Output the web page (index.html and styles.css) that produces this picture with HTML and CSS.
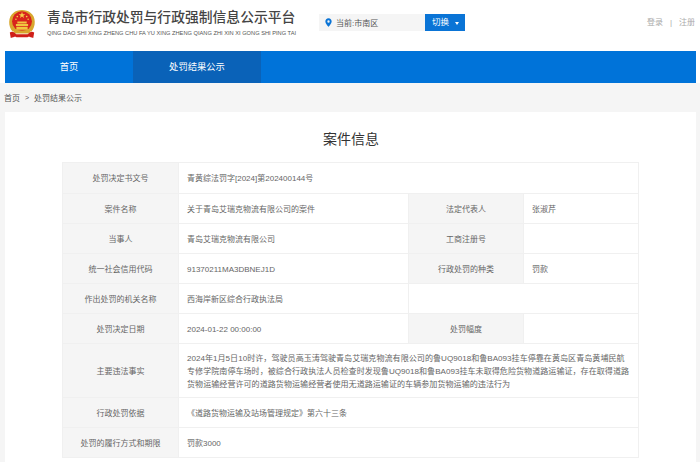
FILE: index.html
```html
<!DOCTYPE html>
<html lang="zh-CN">
<head>
<meta charset="utf-8">
<title>青岛市行政处罚与行政强制信息公示平台</title>
<link rel="stylesheet" href="styles.css">
</head>
<body>
<header class="top">
  <svg class="emblem" viewBox="0 0 32 34" aria-hidden="true">
    <path d="M6 25 C1 20 1 9 7 5 C11 1 21 1 25 5 C31 9 31 20 26 25 Z" fill="#d9a72e"/>
    <circle cx="16" cy="14" r="10.6" fill="#d8231c"/>
    <path d="M16 4 l.9 2.5 2.6 0 -2.1 1.6 .8 2.5 -2.2-1.5 -2.2 1.5 .8-2.5 -2.1-1.6 2.6 0z" fill="#f4cf4a"/>
    <circle cx="11" cy="9" r=".9" fill="#f4cf4a"/><circle cx="21" cy="9" r=".9" fill="#f4cf4a"/>
    <circle cx="9.5" cy="12" r=".8" fill="#f4cf4a"/><circle cx="22.5" cy="12" r=".8" fill="#f4cf4a"/>
    <path d="M9.5 17 h13 v2 h-13z M11 14.2 h10 v2.2 h-10z M10 20 h12 v3 h-12z" fill="#f0c640"/>
    <path d="M7 24 h18 l-1 3 h-16z" fill="#d9a72e"/>
    <path d="M3 26 C6 24 8 26 10 28 L22 28 C24 26 26 24 29 26 L28 32 C25 31 23 30 22 31 L10 31 C9 30 7 31 4 32 Z" fill="#cf1f18"/>
  </svg>
  <div class="brand">
    <div class="brand-cn">青岛市行政处罚与行政强制信息公示平台</div>
    <div class="brand-en">QING DAO SHI XING ZHENG CHU FA YU XING ZHENG QIANG ZHI XIN XI GONG SHI PING TAI</div>
  </div>
  <div class="location">
    <div class="location-box">
      <svg class="pin" viewBox="0 0 10 12" aria-hidden="true">
        <path fill-rule="evenodd" d="M5 0 C2.2 0 .5 2 .5 4.4 C.5 7.4 5 12 5 12 C5 12 9.5 7.4 9.5 4.4 C9.5 2 7.8 0 5 0Z M5 2.8 a1.7 1.7 0 1 1 0 3.4 a1.7 1.7 0 0 1 0-3.4Z" fill="#0a74d6"/>
      </svg>
      <span>当前:市南区</span>
    </div>
    <div class="switch">切换<i class="caret"></i></div>
  </div>
  <div class="auth"><span>登录</span><span class="sep">|</span><span>注册</span></div>
</header>
<nav class="nav">
  <a class="nav-item">首页</a>
  <a class="nav-item active">处罚结果公示</a>
</nav>
<div class="crumb"><span>首页</span><span class="gt">&gt;</span><span>处罚结果公示</span></div>
<main class="card">
  <h1 class="title">案件信息</h1>
  <table class="info">
    <colgroup><col class="c1"><col class="c2"><col class="c3"><col class="c4"></colgroup>
    <tr class="r"><th>处罚决定书文号</th><td colspan="3">青黄综法罚字[2024]第202400144号</td></tr>
    <tr class="r"><th>案件名称</th><td>关于青岛艾瑞克物流有限公司的案件</td><th>法定代表人</th><td>张淑芹</td></tr>
    <tr class="r"><th>当事人</th><td>青岛艾瑞克物流有限公司</td><th>工商注册号</th><td></td></tr>
    <tr class="r"><th>统一社会信用代码</th><td>91370211MA3DBNEJ1D</td><th>行政处罚的种类</th><td>罚款</td></tr>
    <tr class="r"><th>作出处罚的机关名称</th><td>西海岸新区综合行政执法局</td><td colspan="2"></td></tr>
    <tr class="r"><th>处罚决定日期</th><td>2024-01-22 00:00:00</td><th>处罚幅度</th><td></td></tr>
    <tr><th>主要违法事实</th><td colspan="3" class="long">2024年1月5日10时许，驾驶员高玉涛驾驶青岛艾瑞克物流有限公司的鲁UQ9018和鲁BA093挂车停靠在黄岛区青岛黄埔民航专修学院南停车场时，被综合行政执法人员检查时发现鲁UQ9018和鲁BA093挂车未取得危险货物道路运输证，存在取得道路货物运输经营许可的道路货物运输经营者使用无道路运输证的车辆参加货物运输的违法行为</td></tr>
    <tr class="r"><th>行政处罚依据</th><td colspan="3">《道路货物运输及站场管理规定》第六十三条</td></tr>
    <tr class="r"><th>处罚的履行方式和期限</th><td colspan="3">罚款3000</td></tr>
  </table>
</main>
</body>
</html>
```
FILE: styles.css
```css
html, body {
  margin: 0;
  padding: 0;
  height: 462px;
  overflow: hidden;
  background: #f5f5f5;
  font-family: "Liberation Sans", "Noto Sans CJK SC", sans-serif;
}
.top {
  display: flex;
  align-items: flex-start;
  height: 51px;
  box-sizing: border-box;
  background: #fff;
  padding: 8px 5px 0 7px;
}
.emblem { width: 30px; height: 32px; flex: none; }
.brand { margin-left: 10px; width: 272px; flex: none; }
.brand-cn {
  font-size: 13.8px;
  line-height: 20px;
  font-weight: 500;
  color: #444;
  white-space: nowrap;
}
.brand-en {
  font-size: 5.7px;
  line-height: 8px;
  margin-top: 1px;
  color: #555;
  white-space: nowrap;
}
.location { display: flex; margin-top: 6px; height: 17px; }
.location-box {
  width: 106px;
  box-sizing: border-box;
  padding-left: 6px;
  display: flex;
  align-items: center;
  gap: 4px;
  background: #f5f5f5;
  color: #555;
  font-size: 8px;
}
.pin { width: 7px; height: 9px; flex: none; }
.switch {
  width: 40px;
  background: #0a74d6;
  color: #fff;
  font-size: 8.5px;
  line-height: 17px;
  padding-left: 7px;
  box-sizing: border-box;
  display: flex;
  align-items: center;
  gap: 6px;
}
.caret {
  width: 0;
  height: 0;
  margin-top: 2px;
  border-left: 2.5px solid transparent;
  border-right: 2.5px solid transparent;
  border-top: 3px solid #fff;
}
.auth {
  margin-left: auto;
  margin-top: 8px;
  display: flex;
  gap: 7px;
  font-size: 8px;
  line-height: 14px;
  color: #aaa;
}
.nav {
  display: flex;
  height: 32px;
  margin: 0 4px 0 5px;
  background: #0073d9;
}
.top + .nav { box-shadow: -5px 0 0 #fff, 4px 0 0 #fff; }
.nav-item {
  width: 128px;
  text-align: center;
  color: #fff;
  font-size: 9.3px;
  line-height: 32px;
}
.active { background: #0a62b8; }
.crumb {
  height: 29px;
  display: flex;
  align-items: center;
  padding-left: 4px;
  font-size: 8px;
  color: #555;
  gap: 5px;
}
.gt { font-size: 7px; }
.card {
  margin: 0 4px 0 5px;
  height: 350px;
  background: #fff;
  padding: 19px 57px 0 58px;
  box-sizing: border-box;
}
.title {
  margin: 0;
  height: 31px;
  text-align: center;
  font-size: 14px;
  line-height: 16px;
  font-weight: 400;
  color: #333;
}
.info {
  width: 576px;
  margin-left: -1px;
  table-layout: fixed;
  border-collapse: collapse;
  font-size: 8px;
  line-height: 13px;
  color: #666;
}
.c1 { width: 116px; }
.c2 { width: 230px; }
.c3 { width: 115px; }
.c4 { width: 115px; }
.r { height: 30px; }
.info tr:first-child { height: 31px; }
.info th, .info td {
  border: 1px solid #f0f0f0;
  padding: 1px 8px 0;
  box-sizing: border-box;
}
.info th {
  background: #f5f5f5;
  font-weight: 400;
  text-align: center;
  padding: 1px 0 0;
}
.info .long { height: 54px; font-size: 8.08px; }
```
